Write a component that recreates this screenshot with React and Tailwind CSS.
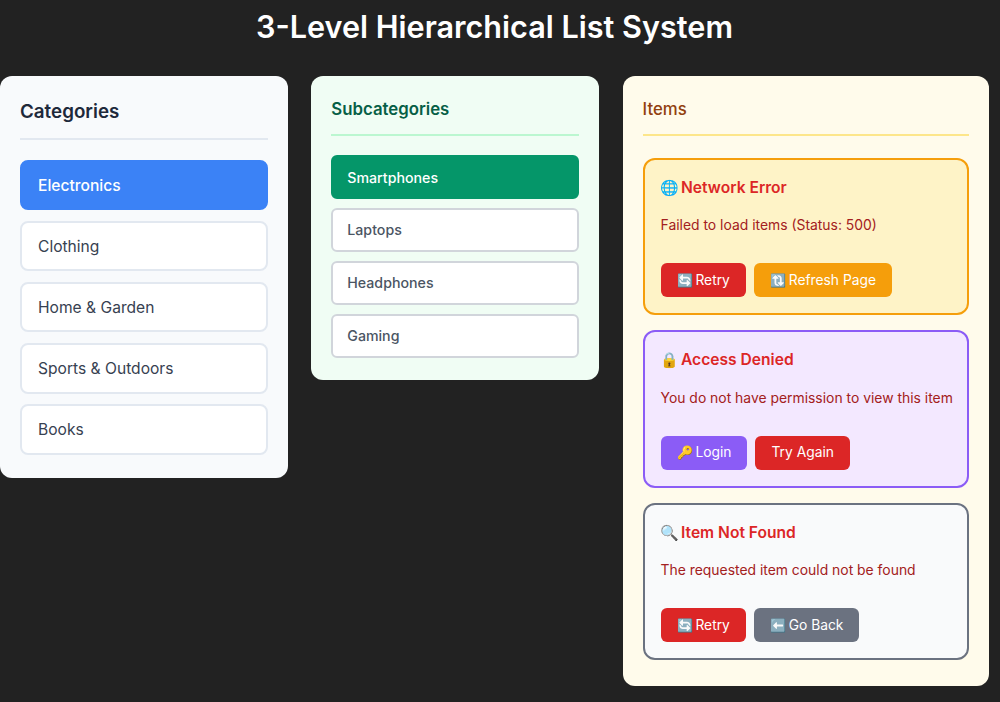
const font = "font-['Inter','Noto_Sans_CJK_SC',sans-serif]";

const categories = ["Electronics", "Clothing", "Home & Garden", "Sports & Outdoors", "Books"];
const subcategories = ["Smartphones", "Laptops", "Headphones", "Gaming"];

function BtnIcon({ children }) {
  return <span className="mr-[-1px] text-[13px]">{children}</span>;
}

function Button({ className, children }) {
  return (
    <button className={`h-[34px] rounded-md px-4 pt-[1px] text-[13.8px] font-normal leading-none text-white ${className}`}>
      {children}
    </button>
  );
}

function ErrorCard({ className, icon, title, message, children }) {
  return (
    <div className={`h-[157.5px] rounded-xl border-2 px-4 pt-[16px] ${className}`}>
      <h3 className="text-[15.6px] font-semibold leading-[24px] text-[#dc2626]">
        <span className="-ml-[1px] mr-[-1.5px] text-[15px]">{icon}</span> {title}
      </h3>
      <p className="mt-[13.5px] whitespace-nowrap text-[13.9px] leading-[24px] text-[#a32020]">{message}</p>
      <div className="mt-[26px] flex gap-2">{children}</div>
    </div>
  );
}

export default function App() {
  return (
    <div className={`min-h-[702px] w-full bg-[#222222] pr-[11px] ${font}`}>
      <h1 className="pt-[8px] text-center text-[30.6px] font-semibold leading-[38px] text-white">
        3-Level Hierarchical List System
      </h1>
      <div className="mt-[30px] flex items-start gap-[23.6px]">
        <section className="w-[287.7px] rounded-xl bg-[#f8fafc] px-5 pt-[21px] pb-[23px]">
          <h2 className="border-b-2 border-[#e2e8f0] pb-[11px] text-[18.8px] font-semibold leading-[30px] text-[#1e293b]">
            Categories
          </h2>
          <div className="mt-[19.5px] flex flex-col gap-[10.7px]">
            {categories.map((c, i) => (
              <div
                key={c}
                className={`flex h-[50.5px] items-center rounded-lg border-2 px-4 pt-[1px] text-[15.6px] ${
                  i === 0 ? "border-[#3b82f6] bg-[#3b82f6] font-medium text-white" : "border-[#e2e8f0] bg-white text-[#374151]"
                }`}
              >
                {c}
              </div>
            ))}
          </div>
        </section>

        <section className="w-[287.7px] rounded-xl bg-[#f0fdf4] px-5 pt-[20px] pb-[22px]">
          <h2 className="border-b-2 border-[#bbf7d0] pb-[10.5px] text-[16.8px] font-semibold leading-[27px] text-[#065f46]">
            Subcategories
          </h2>
          <div className="mt-[19.5px] flex flex-col gap-[8.6px]">
            {subcategories.map((c, i) => (
              <div
                key={c}
                className={`flex h-[44.3px] items-center rounded-md border-2 px-[14px] text-[14.2px] font-medium ${
                  i === 0 ? "border-[#059669] bg-[#059669] text-white" : "border-[#d1d5db] bg-white text-[#4b5563]"
                }`}
              >
                {c}
              </div>
            ))}
          </div>
        </section>

        <section className="min-w-0 flex-1 rounded-xl bg-[#fffbeb] px-5 pt-[20px] pb-[26px]">
          <h2 className="border-b-2 border-[#fde68a] pb-[10.5px] text-[16.8px] font-medium leading-[27px] text-[#92400e]">
            Items
          </h2>
          <div className="mt-[22px] flex flex-col gap-[15px]">
            <ErrorCard className="border-[#f59e0b] bg-[#fef3c7]" icon="🌐" title="Network Error" message="Failed to load items (Status: 500)">
              <Button className="bg-[#dc2626]"><BtnIcon>🔄</BtnIcon> Retry</Button>
              <Button className="bg-[#f59e0b]"><BtnIcon>🔃</BtnIcon> Refresh Page</Button>
            </ErrorCard>
            <ErrorCard className="border-[#8b5cf6] bg-[#f3e8ff]" icon="🔒" title="Access Denied" message="You do not have permission to view this item">
              <Button className="bg-[#8b5cf6]"><BtnIcon>🔑</BtnIcon> Login</Button>
              <Button className="bg-[#dc2626]">Try Again</Button>
            </ErrorCard>
            <ErrorCard className="border-[#6b7280] bg-[#f9fafb]" icon="🔍" title="Item Not Found" message="The requested item could not be found">
              <Button className="bg-[#dc2626]"><BtnIcon>🔄</BtnIcon> Retry</Button>
              <Button className="bg-[#6b7280]"><BtnIcon>⬅️</BtnIcon> Go Back</Button>
            </ErrorCard>
          </div>
        </section>
      </div>
    </div>
  );
}
